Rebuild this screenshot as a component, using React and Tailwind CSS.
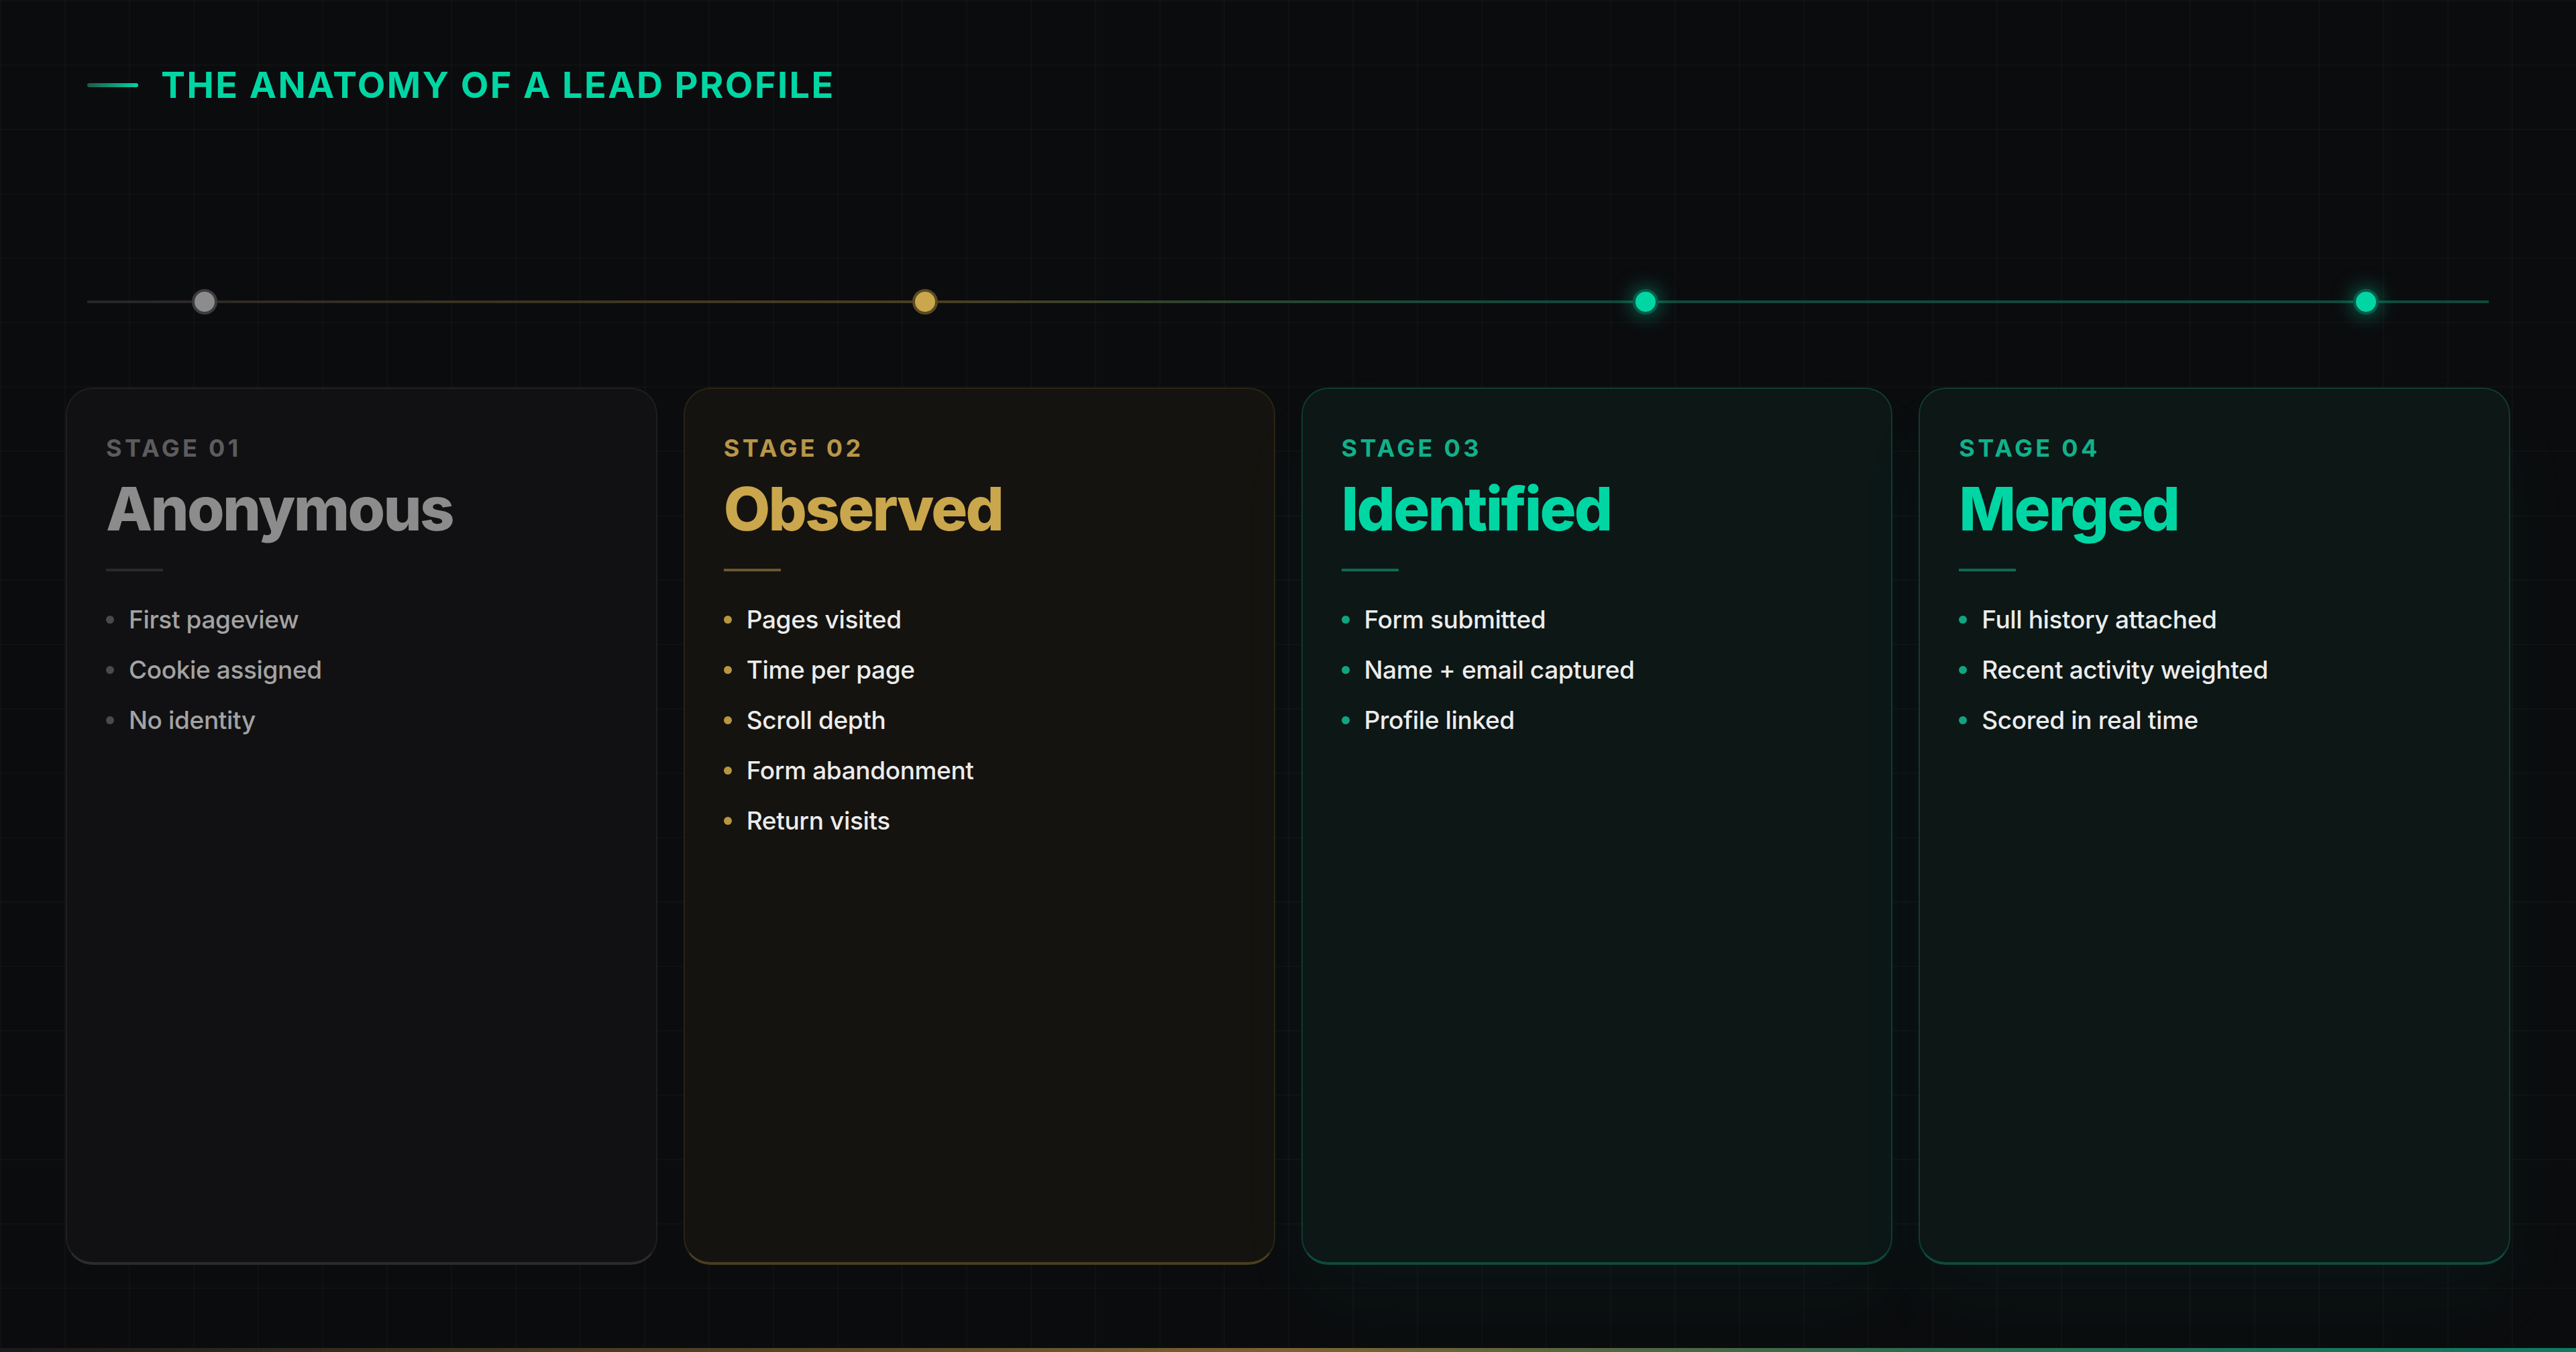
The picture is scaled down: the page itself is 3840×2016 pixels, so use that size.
import React from "react";

const stages = [
  { n: "01", t: "Anonymous", items: ["First pageview", "Cookie assigned", "No identity"], card: "bg-[#111113] border-[#1f1f22] border-b-[#2c2c2e]", label: "text-[#5c5c5e]", title: "text-[#8c8c8c]", div: "bg-[#2a2a2c]", dot: "bg-[#4a4a4c]", text: "text-[#a3a3a3]" },
  { n: "02", t: "Observed", items: ["Pages visited", "Time per page", "Scroll depth", "Form abandonment", "Return visits"], card: "bg-[#15130f] border-[#2a2416] border-b-[#4a3d1e]", label: "text-[#b8964a]", title: "text-[#caa64c]", div: "bg-[#6a5830]", dot: "bg-[#b8963f]", text: "text-[#ececec]" },
  { n: "03", t: "Identified", items: ["Form submitted", "Name + email captured", "Profile linked"], card: "bg-[#0c1716] border-[#103a31] border-b-[#0f4a3c] shadow-[0_60px_120px_rgba(0,217,166,0.04)]", label: "text-[#12b08a]", title: "text-[#00d6a4]", div: "bg-[#0f6a55]", dot: "bg-[#10a582]", text: "text-[#ececec]" },
  { n: "04", t: "Merged", items: ["Full history attached", "Recent activity weighted", "Scored in real time"], card: "bg-[#0c1716] border-[#103a31] border-b-[#0f4a3c] shadow-[0_60px_120px_rgba(0,217,166,0.04)]", label: "text-[#12b08a]", title: "text-[#00d6a4]", div: "bg-[#0f6a55]", dot: "bg-[#10a582]", text: "text-[#ececec]" },
];

export default function App() {
  return (
    <div className="relative w-[3840px] h-[2016px] overflow-hidden bg-[#0b0c0e] bg-[linear-gradient(rgba(255,255,255,0.018)_2px,transparent_2px),linear-gradient(90deg,rgba(255,255,255,0.018)_2px,transparent_2px)] bg-[size:96px_96px] font-[Inter,Roboto,sans-serif] flex flex-col">
      <div className="pt-[100px] px-[130px] flex items-center gap-[34px]">
        <div className="w-[76px] h-[6px] rounded-full bg-[linear-gradient(90deg,#1c5a4a,#00d6a4)]" />
        <div className="text-[54px] leading-none font-bold tracking-[0.045em] text-[#00d6a4]">THE ANATOMY OF A LEAD PROFILE</div>
      </div>

      <div className="relative mx-[130px] mt-[276px] h-[40px]">
        <div className="absolute left-0 right-0 top-[18px] h-[4px] bg-[linear-gradient(90deg,#26262a_0%,#3e3520_20%,#4a3e22_35%,#0f4a3c_60%,#0f4a3c_100%)]" />
        <div className="absolute left-[4.9%] top-[1px] -ml-[19px] w-[38px] h-[38px] rounded-full bg-[#8c8c8c] border-[4px] border-[#3c3c3e]" />
        <div className="absolute left-[34.9%] top-[1px] -ml-[19px] w-[38px] h-[38px] rounded-full bg-[#caa64c] border-[4px] border-[#5a4a22]" />
        <div className="absolute left-[64.9%] top-[1px] -ml-[19px] w-[38px] h-[38px] rounded-full bg-[#00d6a4] border-[4px] border-[#0b5a48] shadow-[0_0_30px_rgba(0,214,164,0.55)]" />
        <div className="absolute left-[94.9%] top-[1px] -ml-[19px] w-[38px] h-[38px] rounded-full bg-[#00d6a4] border-[4px] border-[#0b5a48] shadow-[0_0_30px_rgba(0,214,164,0.55)]" />
      </div>

      <div className="mx-[98px] mt-[108px] grid grid-cols-4 gap-[39px] h-[1308px]">
        {stages.map((s) => (
          <div key={s.n} className={`rounded-[40px] border-2 border-b-[4px] px-[58px] pt-[70px] ${s.card}`}>
            <div className={`text-[36px] leading-none font-bold tracking-[0.12em] ${s.label}`}>STAGE {s.n}</div>
            <div className={`mt-[28px] text-[90px] leading-none font-extrabold tracking-[-0.03em] ${s.title}`}>{s.t}</div>
            <div className={`mt-[44px] w-[85px] h-[4px] ${s.div}`} />
            <div className="mt-[34px] flex flex-col">
              {s.items.map((it) => (
                <div key={it} className="flex items-center gap-[22px] h-[75px]">
                  <div className={`w-[12px] h-[12px] rounded-full ${s.dot}`} />
                  <div className={`text-[37px] font-medium tracking-[-0.01em] ${s.text}`}>{it}</div>
                </div>
              ))}
            </div>
          </div>
        ))}
      </div>

      <div className="absolute left-0 right-0 bottom-0 h-[6px] bg-[linear-gradient(90deg,#1a1a1c_0%,#4a3d22_25%,#7a6232_50%,#2a6a50_75%,#0f7a60_100%)]" />
    </div>
  );
}
